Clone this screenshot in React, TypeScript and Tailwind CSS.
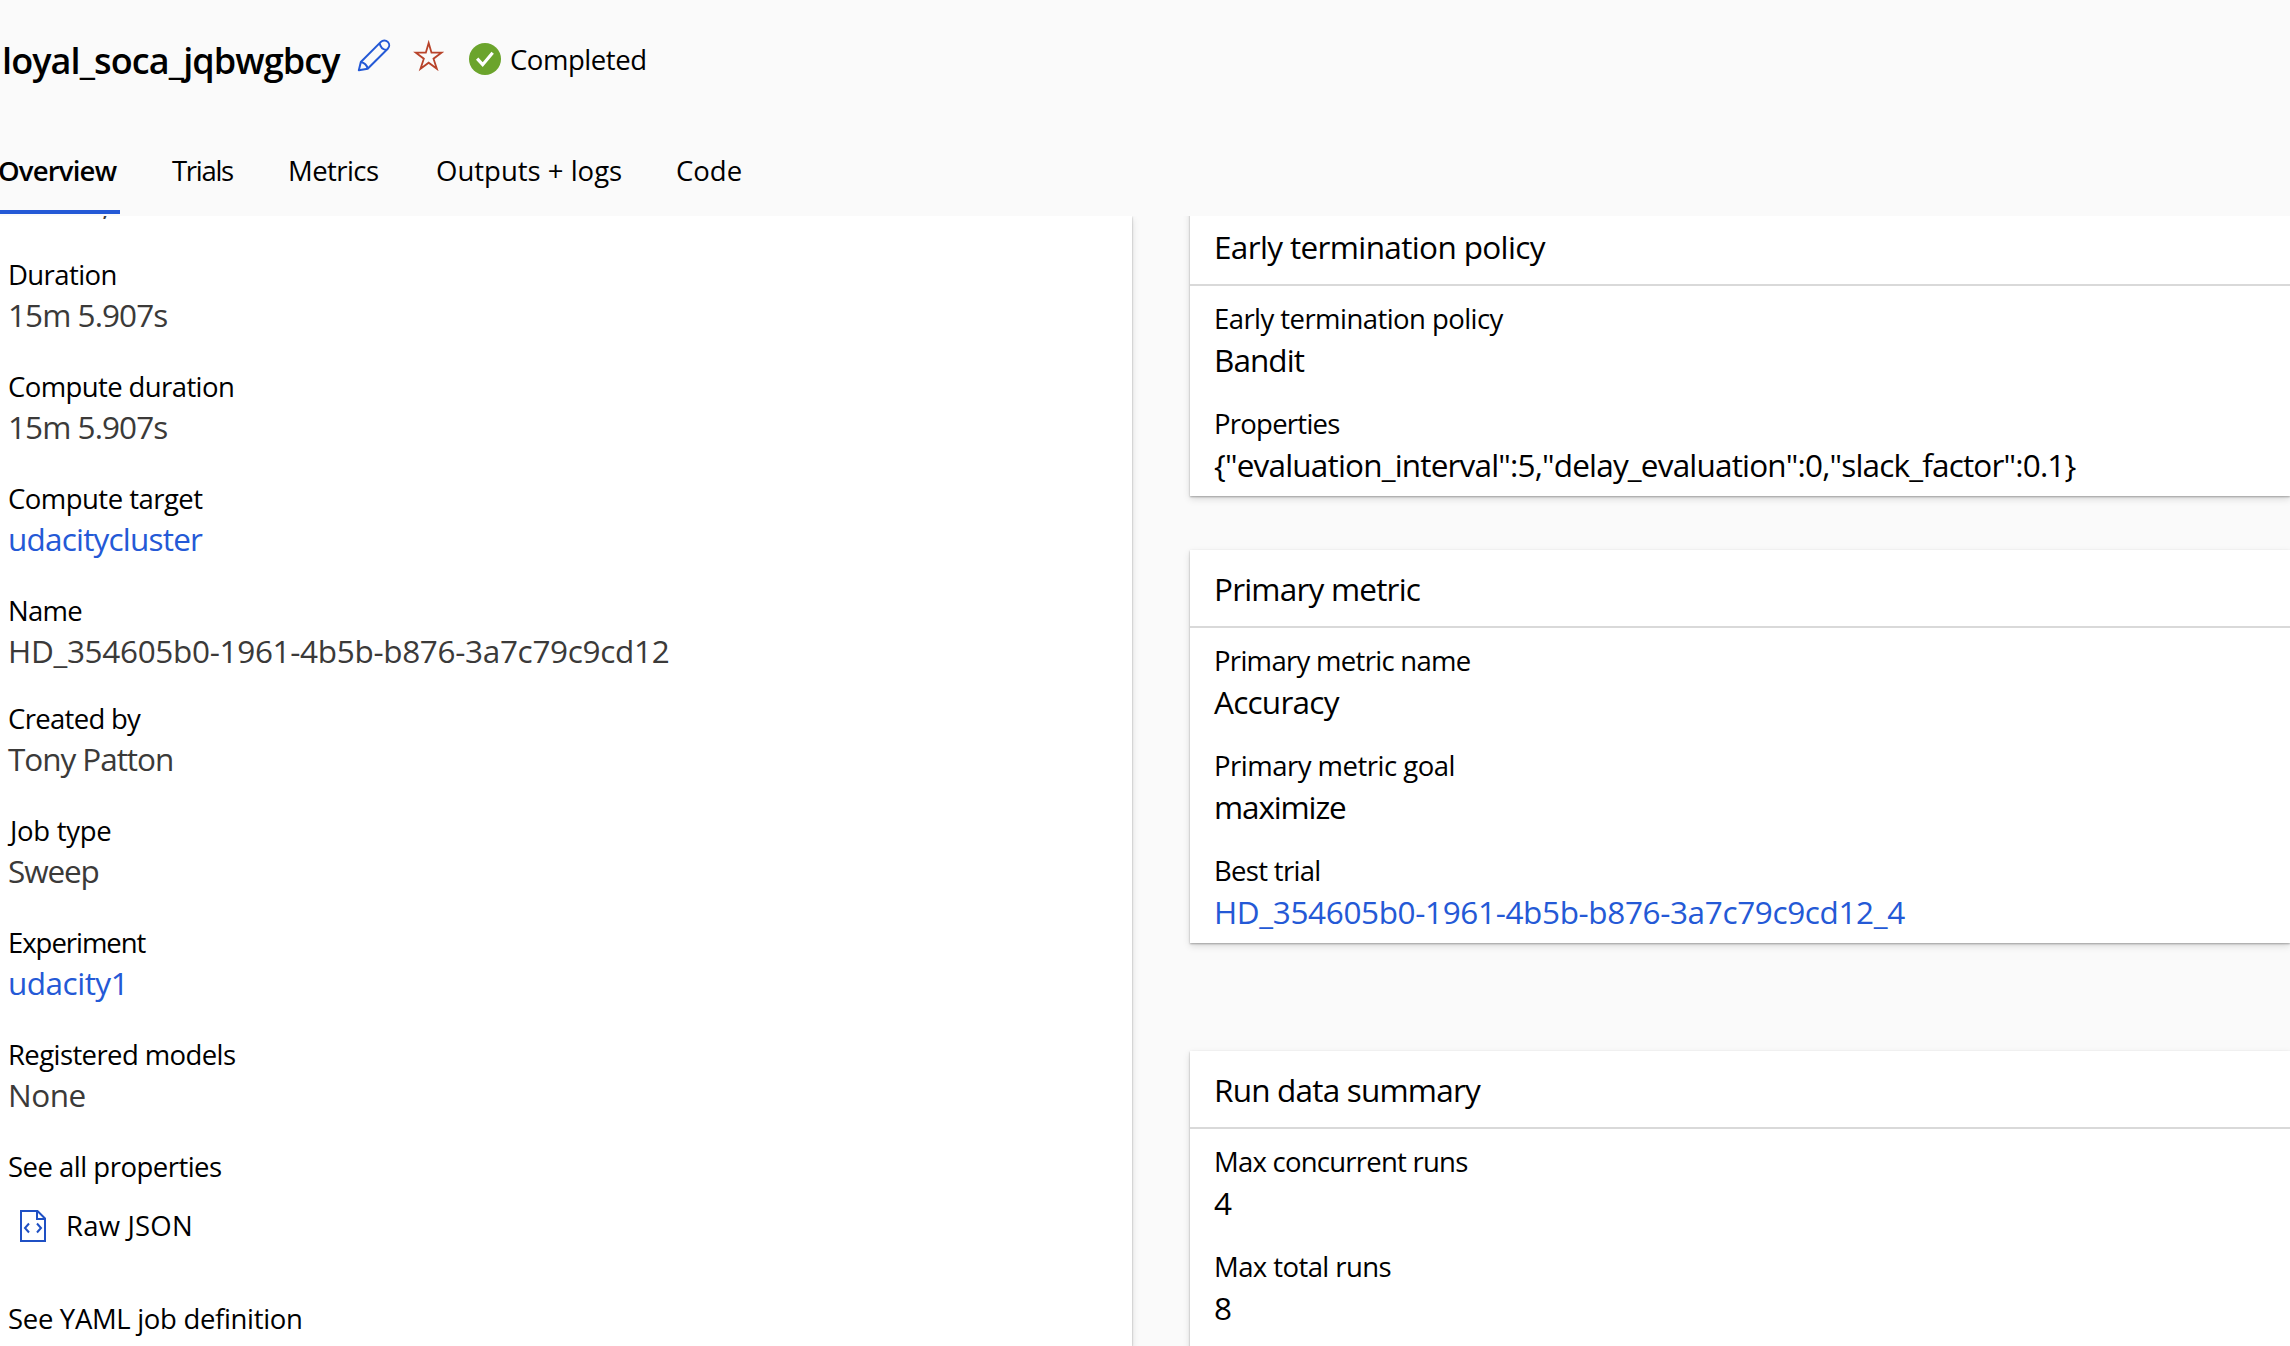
import type { ReactNode } from "react";

type Field = { label: string; value: ReactNode; labelClass?: string; valueClass?: string };

function PencilIcon() {
  return (
    <svg viewBox="50 28 102 102" className="h-[34px] w-[34px] shrink-0" fill="none" stroke="#2459d6" strokeWidth="6" strokeLinejoin="round">
      <path d="M55.5 122 L61.5 97 L121.7 36.7 A14.5 14.5 0 0 1 142.3 57.3 L82 117 Z" />
      <path d="M118 41 Q121 58 138 61" />
      <path d="M61.5 97 Q78 100 82 117" />
    </svg>
  );
}

function StarIcon() {
  return (
    <svg viewBox="216 28 98 102" className="h-[34px] w-[33px] shrink-0" fill="none" stroke="#b8432a" strokeWidth="5.5">
      <path d="M265.5 40 L274 69 L304 69 L280 87 L290 117.500 L265.500 99 L241 117.500 L251 87 L227 69 L257 69 Z" />
    </svg>
  );
}

function CompletedIcon() {
  return (
    <svg viewBox="0 0 96 96" className="h-8 w-8 shrink-0">
      <circle cx="48" cy="48" r="48" fill="#6ba42c" />
      <path d="M24.500 47 L41 65 L71 29" fill="none" stroke="#fff" strokeWidth="9.500" />
    </svg>
  );
}

function JsonFileIcon() {
  return (
    <svg viewBox="0 0 26 32" className="h-8 w-[26px] shrink-0" fill="none" stroke="#1f50c4" strokeWidth="2">
      <path d="M1 1 H17.500 L25 8.500 V31 H1 Z" />
      <path d="M17 1 V9 H25" />
      <path d="M9 13.500 L5 18 L9 22.500 M17 13.500 L21 18 L17 22.500" />
    </svg>
  );
}

const link = "text-[#2459d6]";

const details: (Field & { gapClass?: string })[] = [
  { label: "Duration", value: "15m 5.907s", labelClass: "tracking-[-0.6px]", valueClass: "tracking-[-0.94px] text-[#3b3a39]" },
  { label: "Compute duration", value: "15m 5.907s", labelClass: "tracking-[-0.6px]", valueClass: "tracking-[-0.94px] text-[#3b3a39]" },
  { label: "Compute target", value: "udacitycluster", labelClass: "tracking-[-0.53px]", valueClass: "tracking-[-0.8px] text-[#2459d6]" },
  { label: "Name", value: "HD_354605b0-1961-4b5b-b876-3a7c79c9cd12", labelClass: "tracking-[-0.7px]", valueClass: "tracking-[-0.32px] text-[#3b3a39]", gapClass: "mb-7" },
  { label: "Created by", value: "Tony Patton", labelClass: "tracking-[-0.69px]", valueClass: "tracking-[-1.05px] text-[#3b3a39]" },
  { label: "Job type", value: "Sweep", labelClass: "pl-[2px] tracking-[-0.3px]", valueClass: "tracking-[-1.11px] text-[#3b3a39]" },
  { label: "Experiment", value: "udacity1", labelClass: "tracking-[-1.03px]", valueClass: "tracking-[-0.5px] text-[#2459d6]" },
  { label: "Registered models", value: "None", labelClass: "tracking-[-0.6px]", valueClass: "tracking-[-0.5px] text-[#3b3a39]" },
];

function Card({ title, titleClass, fields, className }: { title: string; titleClass: string; fields: Field[]; className?: string }) {
  return (
    <section className={`bg-white shadow-[0_3.2px_7.2px_rgba(0,0,0,0.132),0_0.6px_1.8px_rgba(0,0,0,0.3)] ${className ?? ""}`}>
      <h2 className={`h-[78px] border-b-2 border-[#d9d9d9] pl-6 text-[31.5px] leading-[77px] ${titleClass}`}>{title}</h2>
      <dl className="flex flex-col gap-[23px] pt-[13px] pb-[10px] pl-6">
        {fields.map((f) => (
          <div key={f.label}>
            <dt className={`text-[27.5px] leading-10 ${f.labelClass}`}>{f.label}</dt>
            <dd className={`text-[31.5px] leading-[42px] ${f.valueClass ?? ""}`}>{f.value}</dd>
          </div>
        ))}
      </dl>
    </section>
  );
}

export default function App() {
  return (
    <div className="flex h-[1346px] w-[2290px] flex-col overflow-hidden bg-[#fafafa] font-['Open_Sans',sans-serif] whitespace-nowrap text-black">
      <header className="flex h-[216px] shrink-0 flex-col">
        <div className="flex h-[114px] items-start pt-9">
          <h1 className="mt-px w-[357px] pl-[2px] text-[36px] leading-[48px] font-semibold tracking-[-0.9px]">loyal_soca_jqbwgbcy</h1>
          <div className="mt-[3px] flex">
            <PencilIcon />
            <span className="ml-[21px]"><StarIcon /></span>
          </div>
          <div className="mt-1 ml-6 flex items-start">
            <span className="mt-[3px]"><CompletedIcon /></span>
            <span className="ml-[9px] text-[27.5px] leading-10 tracking-[-0.45px]">Completed</span>
          </div>
        </div>
        <nav className="flex h-[100px] pt-[37px] text-[27.5px] leading-10">
          <a className="h-[63px] w-[120px] border-b-4 border-[#2459d6] font-semibold tracking-[-0.8px]"><span className="-ml-[2px]">Overview</span></a>
          <a className="ml-[52px] w-[116px] tracking-[-1.3px]">Trials</a>
          <a className="w-[148px] tracking-[-0.56px]">Metrics</a>
          <a className="w-[240px]">Outputs + logs</a>
          <a>Code</a>
        </nav>
      </header>

      <main className="flex min-h-0 flex-1 gap-[58px] overflow-hidden">
        <div className="w-[1132px] shrink-0 bg-white pl-2 shadow-[0_3.2px_7.2px_rgba(0,0,0,0.132),0_0.6px_1.8px_rgba(0,0,0,0.3)]">
          <div className="-mt-[33px] mb-8 h-10 pl-[94px] text-[31.5px] leading-10 text-[#3b3a39]">,</div>
          <dl>
            {details.map((f) => (
              <div key={f.label} className={f.gapClass ?? "mb-8"}>
                <dt className={`text-[27.5px] leading-10 ${f.labelClass}`}>{f.label}</dt>
                <dd className={`text-[31.5px] leading-10 ${f.valueClass}`}>{f.value}</dd>
              </div>
            ))}
          </dl>
          <div className="text-[27.5px] leading-10 tracking-[-0.51px]">See all properties</div>
          <div className="mt-[19px] flex h-10 items-center pl-3">
            <JsonFileIcon />
            <span className="ml-5 text-[27.5px] leading-10 tracking-[0.2px]">Raw JSON</span>
          </div>
          <div className="mt-[53px] text-[27.5px] leading-10 tracking-[-0.32px]">See YAML job definition</div>
        </div>

        <div className="-mt-2 min-w-0 flex-1">
          <Card
            title="Early termination policy"
            titleClass="tracking-[-0.64px]"
            fields={[
              { label: "Early termination policy", value: "Bandit", labelClass: "tracking-[-0.56px]", valueClass: "tracking-[-0.95px]" },
              { label: "Properties", value: '{"evaluation_interval":5,"delay_evaluation":0,"slack_factor":0.1}', labelClass: "tracking-[-0.75px]", valueClass: "tracking-[-0.82px]" },
            ]}
          />
          <Card
            className="mt-[54px]"
            title="Primary metric"
            titleClass="tracking-[-0.8px]"
            fields={[
              { label: "Primary metric name", value: "Accuracy", labelClass: "tracking-[-0.7px]", valueClass: "tracking-[-0.75px]" },
              { label: "Primary metric goal", value: "maximize", labelClass: "tracking-[-0.5px]", valueClass: "tracking-[-1.13px]" },
              { label: "Best trial", value: <a className={link}>HD_354605b0-1961-4b5b-b876-3a7c79c9cd12_4</a>, labelClass: "tracking-[-0.69px]", valueClass: "tracking-[-0.36px]" },
            ]}
          />
          <Card
            className="mt-[108px] h-[320px]"
            title="Run data summary"
            titleClass="tracking-[-0.8px]"
            fields={[
              { label: "Max concurrent runs", value: "4", labelClass: "tracking-[-0.76px]" },
              { label: "Max total runs", value: "8", labelClass: "tracking-[-0.58px]" },
            ]}
          />
        </div>
      </main>
    </div>
  );
}
